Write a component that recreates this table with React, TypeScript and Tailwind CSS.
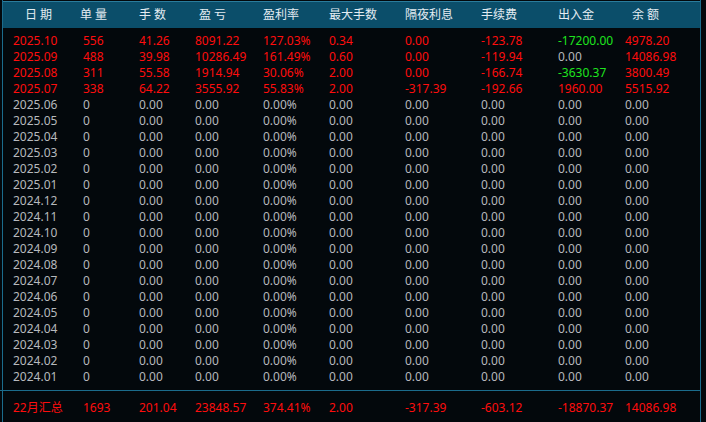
import React from 'react'

type Row = {
  date: string
  cells: string[]
  colors?: string[]
}

const RED = 'text-[#ff0d0d]'
const GREEN = 'text-[#1ee41e]'
const GRAY = 'text-[#b6b9bd]'

const headers = ['日 期', '单 量', '手 数', '盈 亏', '盈利率', '最大手数', '隔夜利息', '手续费', '出入金', '余 额']
// header text sits a little off the data column start
const headerShift = ['pl-[12px]', '-ml-[3px]', '', 'pl-[4px]', '', '', '', '', '', 'pl-[7px]']

const cols = 'grid grid-cols-[70px_56px_56px_68px_66px_76px_76px_77px_67px_1fr]'

const active: Row[] = [
  { date: '2025.10', cells: ['556', '41.26', '8091.22', '127.03%', '0.34', '0.00', '-123.78', '-17200.00', '4978.20'], colors: [RED, RED, RED, RED, RED, RED, RED, GREEN, RED] },
  { date: '2025.09', cells: ['488', '39.98', '10286.49', '161.49%', '0.60', '0.00', '-119.94', '0.00', '14086.98'], colors: [RED, RED, RED, RED, RED, RED, RED, GRAY, RED] },
  { date: '2025.08', cells: ['311', '55.58', '1914.94', '30.06%', '2.00', '0.00', '-166.74', '-3630.37', '3800.49'], colors: [RED, RED, RED, RED, RED, RED, RED, GREEN, RED] },
  { date: '2025.07', cells: ['338', '64.22', '3555.92', '55.83%', '2.00', '-317.39', '-192.66', '1960.00', '5515.92'], colors: [RED, RED, RED, RED, RED, RED, RED, RED, RED] },
]

const emptyMonths = [
  '2025.06', '2025.05', '2025.04', '2025.03', '2025.02', '2025.01',
  '2024.12', '2024.11', '2024.10', '2024.09', '2024.08', '2024.07',
  '2024.06', '2024.05', '2024.04', '2024.03', '2024.02', '2024.01',
]

const rows: Row[] = [
  ...active,
  ...emptyMonths.map((date) => ({
    date,
    cells: ['0', '0.00', '0.00', '0.00%', '0.00', '0.00', '0.00', '0.00', '0.00'],
  })),
]

const summary = ['22月汇总', '1693', '201.04', '23848.57', '374.41%', '2.00', '-317.39', '-603.12', '-18870.37', '14086.98']

export default function App() {
  return (
    <div
      className="w-[706px] h-[422px] bg-[#03080c] overflow-hidden text-[12px] leading-[16px]"
      style={{ fontFamily: '"Noto Sans", "Noto Sans CJK SC", sans-serif' }}
    >
      <div className="ml-[2px] mr-[5px] h-full border-x border-[#1b6c8c] flex flex-col">
        {/* header */}
        <div className={`${cols} mt-[1px] h-[27px] items-center pl-[10px] bg-[#0b4e6a] border-t border-[#2a7c9c] text-[#e4ecf2]`}>
          {headers.map((h, i) => (
            <div key={h} className={`whitespace-pre ${headerShift[i]}`}>
              {h}
            </div>
          ))}
        </div>

        {/* monthly rows */}
        <div className="pt-[5px] pl-[10px]">
          {rows.map((r) => (
            <div key={r.date} className={`${cols} h-[16px]`}>
              <div className={r.colors ? RED : GRAY}>{r.date}</div>
              {r.cells.map((c, i) => (
                <div key={i} className={r.colors ? r.colors[i] : GRAY}>
                  {c}
                </div>
              ))}
            </div>
          ))}
        </div>

        {/* summary */}
        <div className="mt-[5px] -ml-[3px] border-t border-[#1b6c8c]">
          <div className={`${cols} pl-[13px] pt-[9px] ${RED}`}>
            {summary.map((s, i) => (
              <div key={i}>{s}</div>
            ))}
          </div>
        </div>
      </div>
    </div>
  )
}
